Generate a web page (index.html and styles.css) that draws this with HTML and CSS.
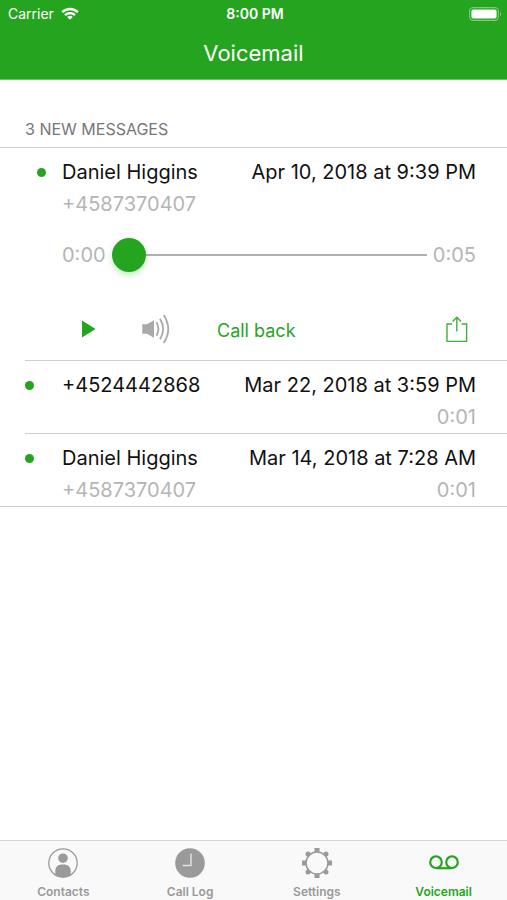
FILE: index.html
```
<!DOCTYPE html>
<html lang="en">
<head>
    <meta charset="UTF-8">
    <meta name="viewport" content="width=device-width, initial-scale=1.0">
    <title>Voicemail</title>
    <link rel="stylesheet" href="styles.css">
</head>
<body>
    <header class="top">
        <div class="status-bar">
            <span class="carrier">
                Carrier
                <svg width="18" height="13" viewBox="0 0 18 13" fill="none" stroke="#fff" stroke-width="2.4">
                    <path d="M1.2 5.2a11 11 0 0 1 15.6 0"/>
                    <path d="M4 8.2a7 7 0 0 1 10 0"/>
                    <path d="M9 12.8L6.2 10a4 4 0 0 1 5.6 0z" fill="#fff" stroke="none"/>
                </svg>
            </span>
            <span class="clock">8:00 PM</span>
            <span class="battery">
                <svg width="33" height="14" viewBox="0 0 33 14">
                    <rect x="0.6" y="0.6" width="28.8" height="12.8" rx="3.6" fill="none" stroke="#7cca7a" stroke-width="1.1"/>
                    <rect x="2.4" y="2.4" width="25.2" height="9.2" rx="2" fill="#fff"/>
                    <path d="M31 5a2.2 2.2 0 0 1 0 4z" fill="#7cca7a"/>
                </svg>
            </span>
        </div>
        <h1>Voicemail</h1>
    </header>

    <main>
        <h2>3 NEW MESSAGES</h2>
        <ul class="messages">
            <li class="message open">
                <div class="summary">
                    <span class="dot"></span>
                    <span class="name">Daniel Higgins</span>
                    <time>Apr 10, 2018 at 9:39 PM</time>
                    <span class="number">+4587370407</span>
                </div>
                <div class="player">
                    <span>0:00</span>
                    <input type="range" min="0" max="5" value="0" aria-label="Position">
                    <span>0:05</span>
                </div>
                <div class="controls">
                    <button class="play" aria-label="Play">
                        <svg width="14" height="18" viewBox="0 0 14 18"><path d="M0 0.5L13.6 9L0 17.5z" fill="#25a51f"/></svg>
                    </button>
                    <button class="speaker" aria-label="Speaker">
                        <svg width="29" height="30" viewBox="0 0 29 30">
                            <path d="M0.3 10.2h4.5L12 6.2v17.6l-7.2-4H0.3z" fill="#a9a9a9"/>
                            <g fill="none" stroke="#a9a9a9" stroke-width="1.8">
                                <path d="M14.4 8.3Q18.4 15 14.4 21.7"/>
                                <path d="M18 4.7Q24.3 15 18 25.3"/>
                                <path d="M21.7 0.9Q30.8 15 21.7 29.1"/>
                            </g>
                        </svg>
                    </button>
                    <button class="call-back">Call back</button>
                    <button class="share" aria-label="Share">
                        <svg width="22" height="27" viewBox="0 0 22 27" fill="none" stroke="#3fb03a" stroke-width="1.4">
                            <path d="M6 8H1v17.4h19.6V8h-5"/>
                            <path d="M10.8 15.4V1.4M6.6 5.4l4.2-4.2L15 5.4"/>
                        </svg>
                    </button>
                </div>
            </li>
            <li class="message">
                <div class="summary">
                    <span class="dot"></span>
                    <span class="name">+4524442868</span>
                    <time>Mar 22, 2018 at 3:59 PM</time>
                    <span class="length">0:01</span>
                </div>
            </li>
            <li class="message">
                <div class="summary">
                    <span class="dot"></span>
                    <span class="name">Daniel Higgins</span>
                    <time>Mar 14, 2018 at 7:28 AM</time>
                    <span class="number">+4587370407</span>
                    <span class="length">0:01</span>
                </div>
            </li>
        </ul>
    </main>

    <nav class="tabs">
        <a href="#contacts">
            <svg width="32" height="32" viewBox="0 0 32 32">
                <circle cx="16" cy="16" r="14.2" fill="none" stroke="#9a9a9a" stroke-width="1.3"/>
                <circle cx="16" cy="11.2" r="4.8" fill="#9a9a9a"/>
                <path d="M8.3 28v-4.5a6 6 0 0 1 6-6h3.4a6 6 0 0 1 6 6V28a14.2 14.2 0 0 1-15.4 0z" fill="#9a9a9a"/>
            </svg>
            Contacts
        </a>
        <a href="#call-log">
            <svg width="32" height="32" viewBox="0 0 32 32">
                <circle cx="16" cy="16" r="14.8" fill="#9a9a9a"/>
                <path d="M17 6.5v12H8.7" fill="none" stroke="#e4e4e4" stroke-width="1.4"/>
            </svg>
            Call Log
        </a>
        <a href="#settings">
            <svg width="32" height="32" viewBox="0 0 32 32">
                <circle cx="16" cy="16" r="11" fill="none" stroke="#9a9a9a" stroke-width="1.5"/>
                <g fill="#9a9a9a">
                    <path d="M13.5 5.3V1h5v4.3zM13.5 26.7V31h5v-4.3zM5.3 13.5H1v5h4.300zM26.7 13.5H31v5h-4.3z"/>
                    <circle cx="7" cy="7" r="2.5"/>
                    <circle cx="25" cy="7" r="2.5"/>
                    <circle cx="7" cy="25" r="2.5"/>
                    <circle cx="25" cy="25" r="2.5"/>
                </g>
            </svg>
            Settings
        </a>
        <a href="#voicemail" class="active">
            <svg width="32" height="32" viewBox="0 0 32 32" fill="none" stroke="#25a51f" stroke-width="2.2">
                <circle cx="8" cy="15.2" r="5.8"/>
                <circle cx="24" cy="15.2" r="5.8"/>
                <path d="M8 21.2h16"/>
            </svg>
            Voicemail
        </a>
    </nav>
</body>
</html>
```
FILE: styles.css
```
* {
    box-sizing: border-box;
}

body {
    margin: 0;
    min-height: 100vh;
    display: flex;
    flex-direction: column;
    font-family: Inter, "Liberation Sans", sans-serif;
    font-size: 20px;
    line-height: 32px;
    color: #111;
    background-color: #fff;
}

/* header */
.top {
    background-color: #25a51f;
    border-bottom: 1px solid #6dc469;
    color: #fff;
}

.status-bar {
    display: grid;
    grid-template-columns: 1fr auto 1fr;
    align-items: center;
    height: 27px;
    padding: 0 5px 0 8px;
    font-size: 14px;
    line-height: 27px;
}

.carrier {
    display: flex;
    align-items: center;
    gap: 7px;
}

.clock {
    font-weight: 600;
}

.battery {
    display: flex;
    justify-content: flex-end;
}

h1 {
    margin: 0;
    font-size: 22px;
    font-weight: 400;
    line-height: 52px;
    text-align: center;
}

/* message list */
main {
    flex: 1;
}

h2 {
    margin: 0;
    padding: 34px 25px 3px;
    font-size: 16px;
    font-weight: 400;
    line-height: 30px;
    color: #777;
}

.messages {
    margin: 0;
    padding: 0 0 0 25px;
    list-style: none;
    border-top: 1px solid #cfcfcf;
    border-bottom: 1px solid #cfcfcf;
}

.message {
    padding: 8px 31px 0 0;
}

.message + .message {
    border-top: 1px solid #cfcfcf;
}

.summary {
    display: grid;
    grid-template-columns: 37px 1fr auto;
    grid-template-rows: 32px 32px;
    align-items: center;
}

.dot {
    width: 9px;
    height: 9px;
    border-radius: 50%;
    background-color: #25a51f;
}

.open .dot {
    margin-left: 12px;
}

.number {
    grid-column: 2;
    color: #b5b5b5;
}

.length {
    grid-column: 3;
    text-align: right;
    color: #b5b5b5;
}

.player {
    display: flex;
    align-items: center;
    gap: 6px;
    height: 70px;
    padding-left: 37px;
    color: #b5b5b5;
}

.player input {
    flex: 1;
    min-width: 0;
    height: 34px;
    margin: 0;
    appearance: none;
    background: linear-gradient(#b0b0b0, #b0b0b0) center / 100% 2px no-repeat;
}

.player input::-webkit-slider-thumb {
    appearance: none;
    width: 34px;
    height: 34px;
    border-radius: 50%;
    background-color: #25a51f;
    box-shadow: 0 3px 6px rgba(37, 165, 31, 0.25);
}

.controls {
    display: flex;
    align-items: center;
    height: 70px;
    padding: 8px 8px 0 57px;
}

button {
    display: flex;
    padding: 0;
    border: none;
    background: none;
    font: inherit;
    cursor: pointer;
}

.speaker {
    margin-left: 46px;
}

.call-back {
    margin-left: 46px;
    padding-top: 4px;
    font-size: 18px;
    color: #25a51f;
}

.share {
    margin-left: auto;
}

/* bottom tabs */
.tabs {
    display: flex;
    height: 60px;
    border-top: 1px solid #d8d8d8;
    background-color: #f9f9f9;
}

.tabs a {
    flex: 1;
    display: flex;
    flex-direction: column;
    align-items: center;
    gap: 5px;
    padding-top: 6px;
    font-size: 12px;
    font-weight: 600;
    line-height: 16px;
    color: #999;
    text-decoration: none;
}

.tabs .active {
    color: #25a51f;
}
```
